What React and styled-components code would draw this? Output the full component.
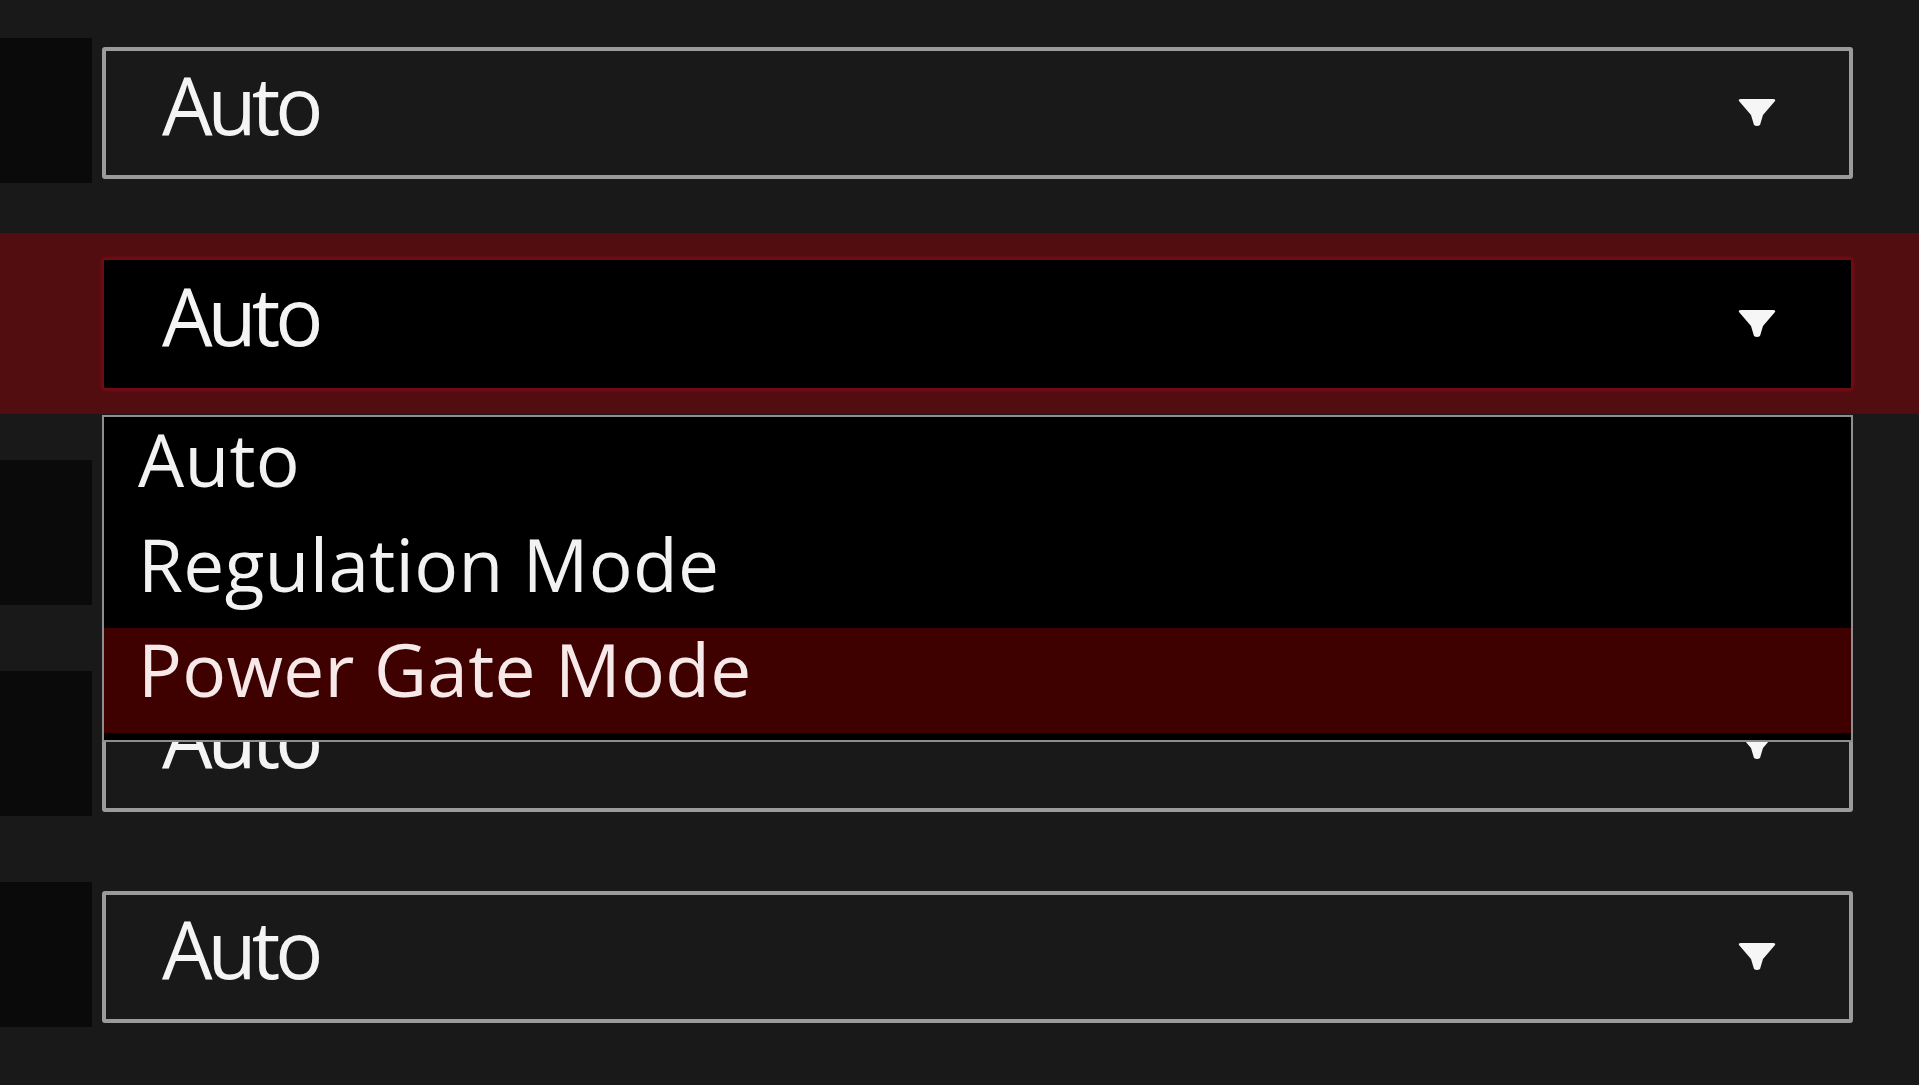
import React from 'react'
import styled, {createGlobalStyle} from 'styled-components'

const GlobalStyle = createGlobalStyle`
    html, body {
        margin: 0;
        padding: 0;
        background: #191919;
        overflow: hidden;
    }
    body {
        font-family: "Open Sans", "Noto Sans", sans-serif;
        color: #f2f2f2;
    }
`

const Page = styled.div`
    width: 1919px;
    height: 1085px;
    padding-top: 22px;
    box-sizing: border-box;
    display: flex;
    flex-direction: column;
    gap: 30px;
`

const Row = styled.div`
    position: relative;
    height: 181px;
    box-sizing: border-box;
    padding: 16px 0 20px;
    display: flex;
    align-items: flex-start;
    background: ${props => props.active ? '#510d10' : 'transparent'};
`

const Side = styled.div`
    width: 92px;
    height: 145px;
    flex-shrink: 0;
    background: ${props => props.active ? 'transparent' : '#0a0a0a'};
`

const Select = styled.div`
    position: relative;
    margin: 9px 0 0 10px;
    width: 1751px;
    height: 132px;
    box-sizing: border-box;
    display: flex;
    align-items: center;
    justify-content: space-between;
    border: ${props => props.active ? '2px solid #6e0b15' : '4px solid #9b9b9b'};
    border-radius: 3px;
    background: ${props => props.active ? '#000' : '#191919'};
    box-shadow: ${props => props.active ? '0 0 4px #8a0a18' : 'none'};
    padding: ${props => props.active ? '0 75px 0 58px' : '0 73px 0 56px'};
`

const Value = styled.span`
    font-size: 80px;
    font-weight: 500;
    line-height: 110px;
    letter-spacing: -5px;
    align-self: flex-start;
    margin-top: ${props => props.active ? '0' : '-2px'};
    color: #f4f4f4;
`

const Menu = styled.ul`
    position: absolute;
    left: 102px;
    top: 182px;
    width: 1751px;
    margin: 0;
    padding: 1px 0 7px;
    box-sizing: border-box;
    list-style: none;
    background: #000;
    border: 2px solid #8e8e8e;
    z-index: 5;
`

const Option = styled.li`
    height: 105px;
    padding-left: 34px;
    font-size: 73px;
    font-weight: 500;
    line-height: 81px;
    letter-spacing: 0.3px;
    color: ${props => props.highlighted ? '#f7e9e9' : '#f2f2f2'};
    background: ${props => props.highlighted ? '#3f0000' : 'transparent'};
`

function Arrow() {
    return (
        <svg width="38" height="28" viewBox="0 0 38 28">
            <path d="M1 2 Q0 0 3 0 H35 Q38 0 37 2 L25 16 L22 26 Q19 28 16 26 L13 16 Z" fill="#f6f6f6" />
        </svg>
    )
}

const rows = ['Auto', 'Auto', 'Auto', 'Auto', 'Auto']
const options = ['Auto', 'Regulation Mode', 'Power Gate Mode']

export default function App() {
    return (
        <>
            <GlobalStyle />
            <Page>
                {rows.map((value, i) => {
                    const active = i === 1
                    return (
                        <Row key={i} active={active}>
                            <Side active={active} />
                            <Select active={active}>
                                <Value active={active}>{value}</Value>
                                <Arrow />
                            </Select>
                            {active && (
                                <Menu>
                                    {options.map(opt => (
                                        <Option key={opt} highlighted={opt === 'Power Gate Mode'}>{opt}</Option>
                                    ))}
                                </Menu>
                            )}
                        </Row>
                    )
                })}
            </Page>
        </>
    )
}
